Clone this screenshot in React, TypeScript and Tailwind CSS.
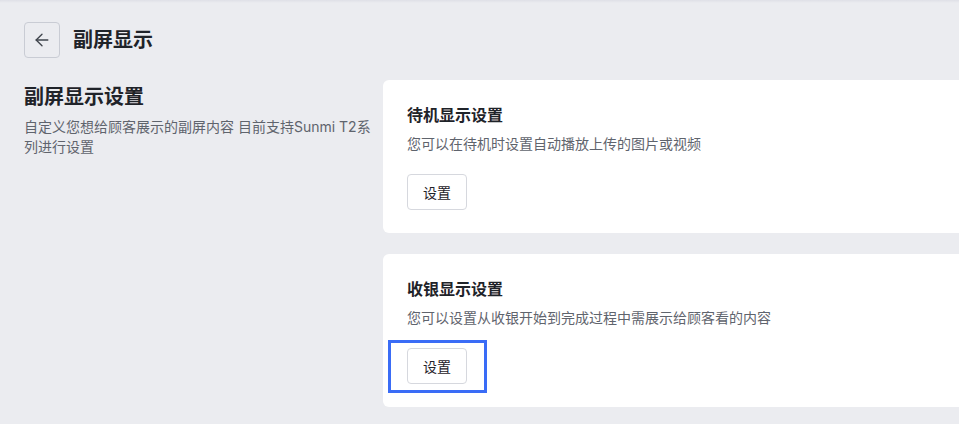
import React from "react";
import { ArrowLeft } from "lucide-react";

const SettingCard = ({ title, desc, focused }: { title: string; desc: string; focused?: boolean }) => {
  return (
    <div className="w-[620px] rounded-md bg-white pl-6 pt-6 pb-[23px]">
      <p className="text-[16px] leading-[22px] font-semibold text-[#1f2329]">{title}</p>
      <p className="mt-2 text-[14px] leading-[20px] text-[#5f646d]">{desc}</p>
      <div className="relative mt-5 w-fit">
        <button className="h-9 w-[60px] rounded-[4px] border border-[#d6d8de] bg-white text-[14px] text-[#1f2329]">
          设置
        </button>
        {focused && (
          // highlight frame drawn over the button
          <div className="pointer-events-none absolute -left-[19px] -top-[8px] h-[53px] w-[99px] border-[3px] border-[#3a6cf6]" />
        )}
      </div>
    </div>
  );
};

export default function App() {
  return (
    <div
      className="h-[424px] w-[959px] overflow-hidden bg-[#ebecf0]"
      style={{ fontFamily: 'Inter, "Noto Sans CJK SC", sans-serif' }}
    >
      <div className="h-[3px] bg-gradient-to-b from-[#dfe0e7] to-[#ebecf0]" />
      <div className="flex items-center gap-[13px] pl-6 pt-[19px]">
        <button className="flex h-9 w-9 items-center justify-center rounded-[4px] border border-[#c9ccd4] text-[#3f444c]">
          <ArrowLeft size={20} strokeWidth={1.6} />
        </button>
        <h1 className="text-[20px] font-semibold text-[#1f2329]">副屏显示</h1>
      </div>
      <div className="mt-[22px] flex pl-6">
        <div className="w-[348px] shrink-0 pt-[3px]">
          <h2 className="text-[20px] leading-[28px] font-semibold text-[#1f2329]">副屏显示设置</h2>
          <p className="mt-[6px] text-[14px] leading-[20px] text-[#5f646d]">
            自定义您想给顾客展示的副屏内容 目前支持Sunmi T2系列进行设置
          </p>
        </div>
        <div className="ml-[11px] flex shrink-0 flex-col gap-[21px]">
          <SettingCard title="待机显示设置" desc="您可以在待机时设置自动播放上传的图片或视频" />
          <SettingCard title="收银显示设置" desc="您可以设置从收银开始到完成过程中需展示给顾客看的内容" focused />
        </div>
      </div>
    </div>
  );
}
